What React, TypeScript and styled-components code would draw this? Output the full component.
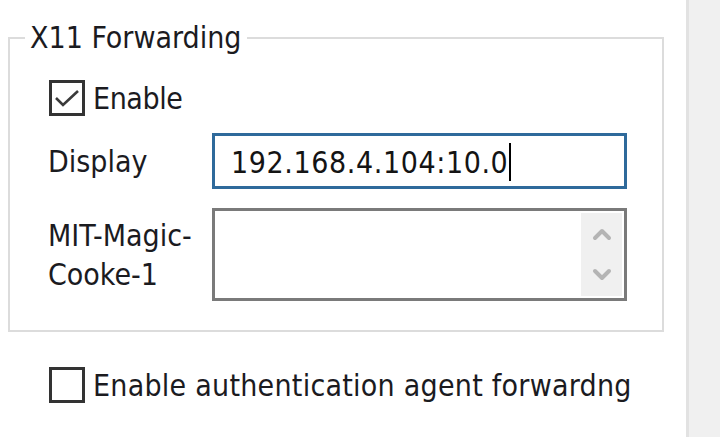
import React from "react";
import styled, { createGlobalStyle } from "styled-components";

const GlobalStyle = createGlobalStyle`
  html, body {
    margin: 0;
    padding: 0;
    background: #ffffff;
  }
  body {
    font-family: "DejaVu Sans Condensed", "DejaVu Sans", sans-serif;
    font-stretch: condensed;
    color: #1b1b1f;
  }
`;

const Window = styled.div`
  display: flex;
  width: 720px;
  height: 437px;
  overflow: hidden;
  background: #ffffff;
`;

const Panel = styled.div`
  flex: 0 0 686px;
  padding: 22px 0 0 8px;
  box-sizing: border-box;
`;

const SideStrip = styled.div`
  flex: 1;
  background: #f0f0f0;
  border-left: 3px solid #e2e2e2;
`;

const Group = styled.fieldset`
  width: 656px;
  height: 310px;
  margin: 0;
  padding: 0;
  box-sizing: border-box;
  border: 2px solid #dcdcdc;
`;

const Legend = styled.legend`
  margin-left: 15px;
  padding: 0 5px;
  font-size: 30px;
  line-height: 32px;
`;

const GroupBody = styled.div`
  padding: 0 0 0 38px;
`;

const CheckRow = styled.label<{ $top: number; $left?: number; $spacing?: number }>`
  display: flex;
  align-items: center;
  gap: 8px;
  margin-top: ${(p) => p.$top}px;
  margin-left: ${(p) => p.$left ?? 0}px;
  font-size: 30px;
  height: 36px;
  letter-spacing: ${(p) => p.$spacing ?? 0}px;
`;

const Box = styled.span`
  display: flex;
  align-items: center;
  justify-content: center;
  flex: 0 0 36px;
  width: 36px;
  height: 36px;
  box-sizing: border-box;
  border: 3px solid #333333;
  background: #ffffff;
`;

const FieldRow = styled.div<{ $top: number }>`
  display: flex;
  align-items: center;
  margin-top: ${(p) => p.$top}px;
`;

const FieldLabel = styled.div`
  width: 164px;
  font-size: 30px;
  line-height: 39px;
`;

const TextBox = styled.div<{ $tall?: boolean }>`
  position: relative;
  display: flex;
  align-items: center;
  width: 415px;
  height: ${(p) => (p.$tall ? 93 : 56)}px;
  box-sizing: border-box;
  border: 3px solid ${(p) => (p.$tall ? "#7a7a7a" : "#2f6a9b")};
  padding: 2px 0 0 16px;
  background: #ffffff;
  font-size: 30px;
  letter-spacing: 0.6px;
  color: #141414;
`;

const Caret = styled.span`
  display: inline-block;
  width: 2px;
  height: 38px;
  margin-left: 1px;
  background: #000000;
`;

const ScrollBar = styled.div`
  position: absolute;
  top: 2px;
  right: 2px;
  bottom: 2px;
  width: 41px;
  display: flex;
  flex-direction: column;
  align-items: center;
  justify-content: space-between;
  padding: 14px 0 14px;
  box-sizing: border-box;
  background: #f0f0f0;
`;

const Chevron = ({ up }: { up?: boolean }) => (
  <svg width="20" height="14" viewBox="0 0 20 14">
    <path
      d={up ? "M3 11 L10 4 L17 11" : "M3 3 L10 10 L17 3"}
      fill="none"
      stroke="#b4b4b4"
      strokeWidth="4"
      strokeLinecap="round"
      strokeLinejoin="round"
    />
  </svg>
);

const Check = () => (
  <svg width="30" height="30" viewBox="0 0 30 30">
    <path
      d="M4 15 L11 22 L26 8"
      fill="none"
      stroke="#3a3a3a"
      strokeWidth="2.6"
      strokeLinejoin="miter"
    />
  </svg>
);

export default function App() {
  return (
    <>
      <GlobalStyle />
      <Window>
        <Panel>
          <Group>
            <Legend>X11 Forwarding</Legend>
            <GroupBody>
              <CheckRow $top={26} $left={1} $spacing={-0.4}>
                <Box>
                  <Check />
                </Box>
                Enable
              </CheckRow>
              <FieldRow $top={17}>
                <FieldLabel>Display</FieldLabel>
                <TextBox>
                  192.168.4.104:10.0
                  <Caret />
                </TextBox>
              </FieldRow>
              <FieldRow $top={19}>
                <FieldLabel>
                  MIT-Magic-
                  <br />
                  Cooke-1
                </FieldLabel>
                <TextBox $tall>
                  <ScrollBar>
                    <Chevron up />
                    <Chevron />
                  </ScrollBar>
                </TextBox>
              </FieldRow>
            </GroupBody>
          </Group>
          <CheckRow $top={35} $left={41} $spacing={0.25}>
            <Box />
            Enable authentication agent forwardng
          </CheckRow>
        </Panel>
        <SideStrip />
      </Window>
    </>
  );
}
